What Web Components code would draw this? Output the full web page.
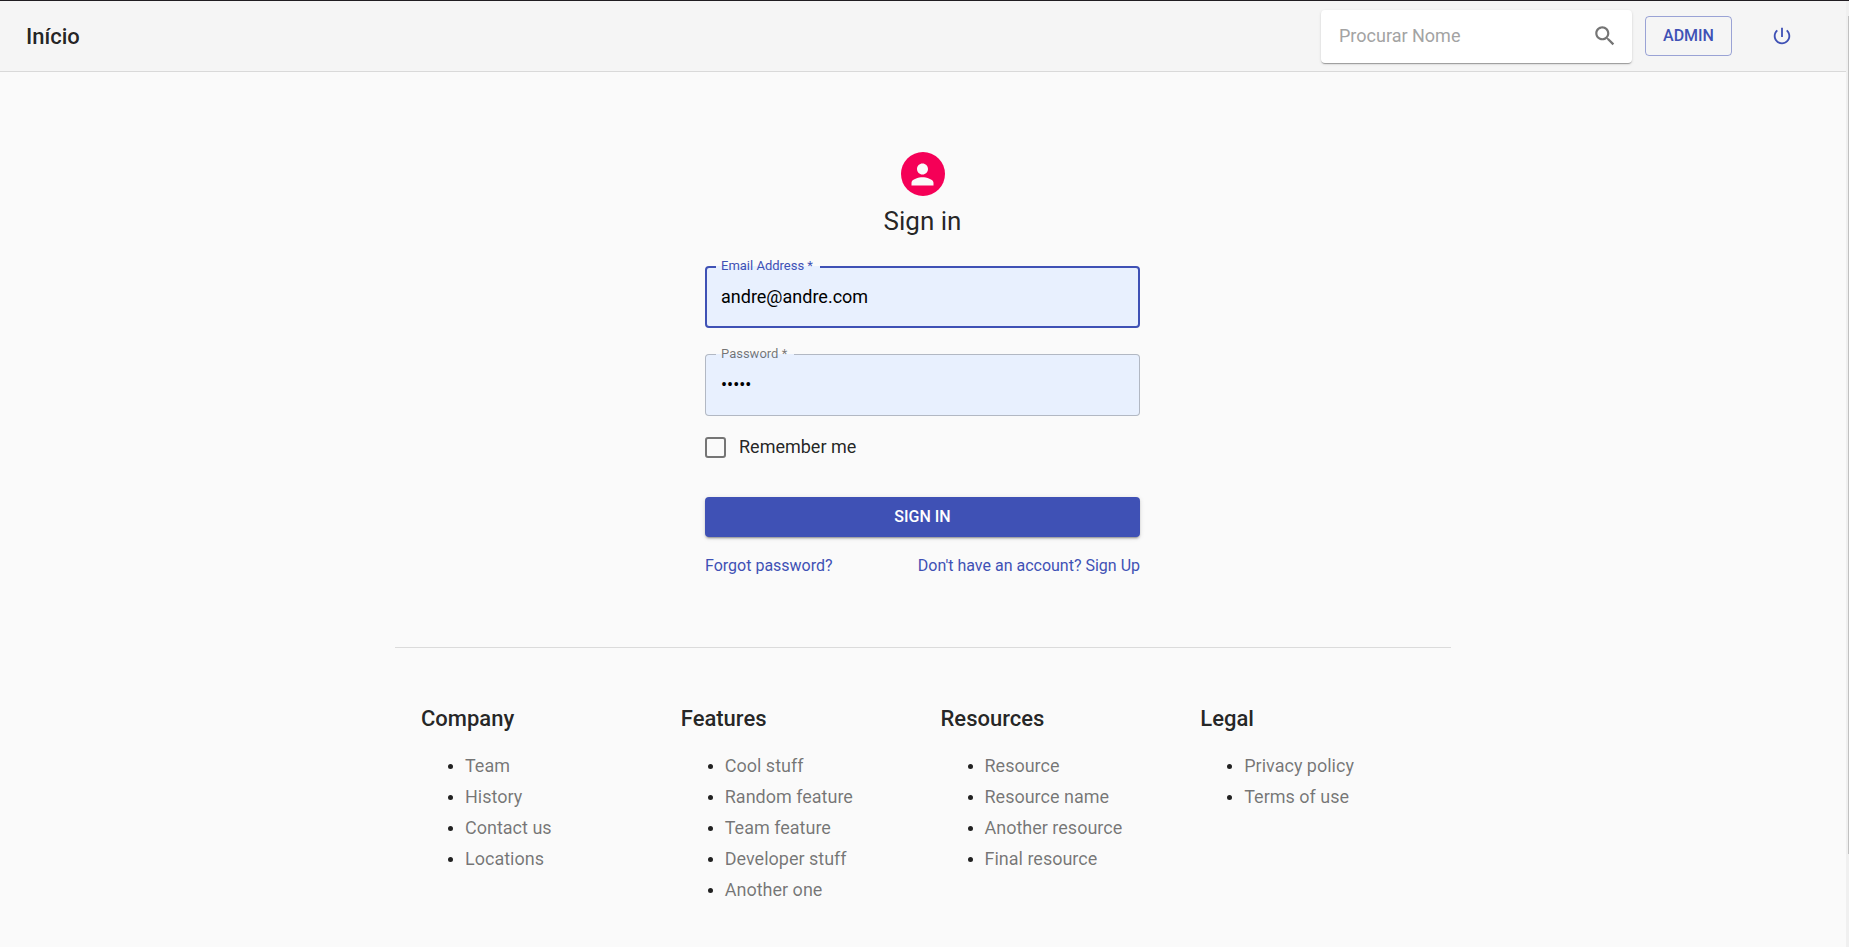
<!DOCTYPE html>
<html lang="pt">
<head>
<meta charset="utf-8">
<meta name="viewport" content="width=device-width, initial-scale=1">
<title>Início</title>
<style>
  :root {
    --primary: #3f51b5;
    --secondary: #f50057;
    --page: #fafafa;
    --bar: #f5f5f5;
    --field: #e8f0fe;
    --text: rgba(0, 0, 0, .87);
    --text-muted: rgba(0, 0, 0, .54);
    --divider: rgba(0, 0, 0, .12);
  }
  body {
    margin: 0;
    background: var(--page);
    color: var(--text);
    font: 400 18px/26px Roboto, "Liberation Sans", sans-serif;
  }
</style>
</head>
<body>
<page-shell>
  <app-header slot="header" heading="Início"></app-header>
  <sign-in-form></sign-in-form>
  <site-footer slot="footer">
    <footer-column heading="Company" items="Team|History|Contact us|Locations"></footer-column>
    <footer-column heading="Features" items="Cool stuff|Random feature|Team feature|Developer stuff|Another one"></footer-column>
    <footer-column heading="Resources" items="Resource|Resource name|Another resource|Final resource"></footer-column>
    <footer-column heading="Legal" items="Privacy policy|Terms of use"></footer-column>
  </site-footer>
</page-shell>

<script>
const define = (name, render) => customElements.define(name, class extends HTMLElement {
  constructor() {
    super();
    this.attachShadow({ mode: "open" });
  }
  connectedCallback() {
    this.shadowRoot.innerHTML = render(this);
  }
});

/* Page frame: top edge, content column and scroll rail */
define("page-shell", () => `
  <style>
    :host { display: flex; min-height: 100vh; box-sizing: border-box; border-top: 1px solid #211d22; }
    .content { flex: 1; min-width: 0; }
    .rail { width: 3px; display: flex; flex-direction: column; align-items: flex-end; background: #f0f0f0; }
    .rail::before { content: ""; flex: 0 0 15px; }
    .thumb { flex: 9 1 0; width: 1px; background: #c1c1c1; }
    .rail::after { content: ""; flex: 1 1 0; }
  </style>
  <div class="content">
    <slot name="header"></slot>
    <main><slot></slot></main>
    <slot name="footer"></slot>
  </div>
  <div class="rail" aria-hidden="true"><div class="thumb"></div></div>`);

define("app-header", el => `
  <style>
    :host { display: block; background: var(--bar); border-bottom: 1px solid #d9d9d9; }
    header { display: flex; align-items: center; height: 70px; padding: 0 27px 0 26px; }
    h1 { flex: 1; margin: 0; font-size: 22px; line-height: 35px; font-weight: 500; }
  </style>
  <header>
    <h1>${el.getAttribute("heading")}</h1>
    <search-box placeholder="Procurar Nome"></search-box>
    <user-actions></user-actions>
  </header>`);

define("search-box", el => `
  <style>
    :host { display: block; width: 311px; margin-right: 13px; }
    form {
      display: flex; align-items: center; box-sizing: border-box; height: 53px; padding: 0 14px 0 18px;
      background: #fff; border-radius: 4px;
      box-shadow: 0 2px 1px -1px rgba(0,0,0,.2), 0 1px 1px 0 rgba(0,0,0,.14), 0 1px 3px 0 rgba(0,0,0,.12);
    }
    input { flex: 1; min-width: 0; padding: 0; border: 0; outline: 0; background: none; color: inherit; font: inherit; }
    input::placeholder { color: #a3a3a3; opacity: 1; }
    button { display: flex; padding: 0; border: 0; background: none; color: #757575; cursor: pointer; }
    svg { width: 26px; height: 26px; fill: currentColor; }
  </style>
  <form role="search">
    <input type="text" aria-label="${el.getAttribute("placeholder")}" placeholder="${el.getAttribute("placeholder")}">
    <button type="button" aria-label="Procurar">
      <svg viewBox="0 0 24 24"><path d="M15.5 14h-.79l-.28-.27C15.41 12.59 16 11.11 16 9.5 16 5.91 13.09 3 9.5 3S3 5.91 3 9.5 5.91 16 9.5 16c1.61 0 3.09-.59 4.23-1.57l.27.28v.79l5 4.99L20.49 19l-4.99-5zm-6 0C7.01 14 5 11.99 5 9.5S7.01 5 9.5 5 14 7.01 14 9.5 11.99 14 9.5 14z"/></svg>
    </button>
  </form>`);

define("user-actions", () => `
  <style>
    :host { display: flex; align-items: center; gap: 13px; }
    button {
      display: flex; align-items: center; justify-content: center; box-sizing: border-box; height: 40px;
      border: 0; border-radius: 4px; background: none; color: var(--primary);
      font: 500 16px/26px Roboto, "Liberation Sans", sans-serif; cursor: pointer;
    }
    .admin { width: 87px; border: 1px solid rgba(63, 81, 181, .5); }
    .power { width: 74px; }
    svg { width: 22px; height: 22px; fill: currentColor; }
  </style>
  <button type="button" class="admin">ADMIN</button>
  <button type="button" class="power" aria-label="Sair">
    <svg viewBox="0 0 24 24"><path d="M13 3h-2v10h2V3zm4.830 2.170l-1.420 1.420C17.990 7.860 19 9.810 19 12c0 3.870-3.130 7-7 7s-7-3.130-7-7c0-2.190 1.010-4.140 2.580-5.420L6.170 5.170C4.230 6.820 3 9.260 3 12c0 4.970 4.030 9 9 9s9-4.030 9-9c0-2.740-1.230-5.180-3.170-6.830z"/></svg>
  </button>`);

define("sign-in-form", () => `
  <style>
    :host { display: flex; flex-direction: column; align-items: center; padding: 80px 27px 0 26px; }
    .avatar { display: flex; align-items: center; justify-content: center; width: 44px; height: 44px; border-radius: 50%; background: var(--secondary); }
    .avatar svg { width: 33px; height: 33px; fill: var(--page); }
    h2 { margin: 8px 0 27px; font-size: 26px; line-height: 35px; font-weight: 400; }
    form { display: flex; flex-direction: column; width: 100%; max-width: 435px; }
    outlined-field + outlined-field { margin-top: 26px; }
    .remember { display: flex; align-items: center; align-self: flex-start; gap: 13px; margin: 18px 0 37px; cursor: pointer; }
    .remember input { appearance: none; box-sizing: border-box; width: 21px; height: 21px; margin: 0; border: 2px solid #757575; border-radius: 3px; }
    .remember input:checked { border-color: var(--primary); background: var(--primary); }
    .submit {
      height: 40px; padding: 0; border: 0; border-radius: 4px; background: var(--primary); color: #fff;
      font: 500 16px/26px Roboto, "Liberation Sans", sans-serif; cursor: pointer;
      box-shadow: 0 3px 1px -2px rgba(0,0,0,.2), 0 2px 2px 0 rgba(0,0,0,.14), 0 1px 5px 0 rgba(0,0,0,.12);
    }
    nav { display: flex; justify-content: space-between; margin-top: 18px; font-size: 16px; line-height: 22px; }
    a { color: var(--primary); text-decoration: none; }
    a:hover { text-decoration: underline; }
  </style>
  <div class="avatar">
    <svg viewBox="0 0 24 24" aria-hidden="true"><path d="M12 12c2.210 0 4-1.790 4-4s-1.790-4-4-4-4 1.790-4 4 1.790 4 4 4zm0 2c-2.670 0-8 1.340-8 4v2h16v-2c0-2.660-5.330-4-8-4z"/></svg>
  </div>
  <h2>Sign in</h2>
  <form>
    <outlined-field label="Email Address" type="email" value="andre@andre.com" active></outlined-field>
    <outlined-field label="Password" type="password" value="andre"></outlined-field>
    <label class="remember"><input type="checkbox">Remember me</label>
    <button type="button" class="submit">SIGN IN</button>
    <nav><a href="#forgot">Forgot password?</a><a href="#signup">Don't have an account? Sign Up</a></nav>
  </form>`);

/* Outlined text field whose label sits in a notch of the border */
define("outlined-field", el => `
  <style>
    :host { display: block; position: relative; }
    input {
      display: block; box-sizing: border-box; width: 100%; height: 62px; padding: 0 15px 2px;
      border: 1px solid rgba(0, 0, 0, .23); border-radius: 4px; outline: 0;
      background: var(--field); color: #000; font: inherit;
    }
    label {
      position: absolute; top: -8px; left: 11px; padding: 0 7px 0 5px;
      background: linear-gradient(var(--page) 50%, var(--field) 50%);
      color: var(--text-muted); font-size: 13px; line-height: 16px;
    }
    :host([active]) input { border: 2px solid var(--primary); padding: 0 14px 2px; }
    :host([active]) label { color: var(--primary); }
  </style>
  <input id="control" type="${el.getAttribute("type")}" value="${el.getAttribute("value")}" required>
  <label for="control">${el.getAttribute("label")} *</label>`);

define("site-footer", () => `
  <style>
    :host { display: block; box-sizing: border-box; max-width: 1056px; margin: 70px auto 0; padding: 53px 26px 26px; border-top: 1px solid var(--divider); }
    footer { display: grid; grid-template-columns: repeat(4, 1fr); gap: 35px; }
  </style>
  <footer><slot></slot></footer>`);

define("footer-column", el => `
  <style>
    :host { display: block; }
    h3 { margin: 0 0 14px; font-size: 22px; line-height: 35px; font-weight: 500; }
    ul { margin: 0; padding: 0 0 0 44px; font-size: 18px; line-height: 31px; }
    li::marker { font-size: 16px; }
    a { color: var(--text-muted); text-decoration: none; }
    a:hover { text-decoration: underline; }
  </style>
  <h3>${el.getAttribute("heading")}</h3>
  <ul>${el.getAttribute("items").split("|").map(item => `<li><a href="#">${item}</a></li>`).join("")}</ul>`);
</script>
</body>
</html>
